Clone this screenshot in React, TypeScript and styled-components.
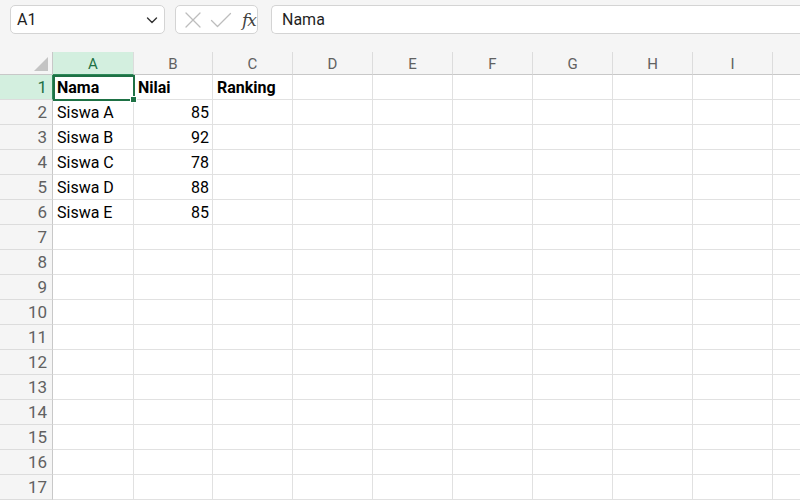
import { createGlobalStyle } from 'styled-components';
import styled from 'styled-components';
import { Fragment } from 'react';

const GlobalStyle = createGlobalStyle`
  html, body { margin: 0; padding: 0; background: #fff; }
  body { font-family: Roboto, "Liberation Sans", sans-serif; overflow: hidden; }
`;

const Page = styled.div`
  width: 800px;
  height: 501px;
  overflow: hidden;
  background: #fff;
  display: flex;
  flex-direction: column;
`;

const Toolbar = styled.div`
  height: 52px;
  flex: none;
  background: #f5f5f5;
  display: flex;
  align-items: flex-start;
  padding: 5px 0 0 10px;
  box-sizing: border-box;
  gap: 10px;
`;

const Box = styled.div<{ $w?: number }>`
  height: 29px;
  box-sizing: border-box;
  background: #fff;
  border: 1px solid #d4d4d4;
  border-radius: 5px;
  display: flex;
  align-items: center;
  ${({ $w }) => ($w ? `width: ${$w}px; flex: none;` : 'flex: 1; border-right: none; border-radius: 5px 0 0 5px;')}
`;

const NameBox = styled(Box)`
  justify-content: space-between;
  padding: 0 4px 0 6px;
  font-size: 16px;
  color: #1f1f1f;
`;

const FxGroup = styled(Box)`
  padding: 0 0 0 8px;
  gap: 8px;
`;

const FormulaBox = styled(Box)`
  margin-left: 3px;
  padding-left: 10px;
  font-size: 16px;
  color: #1f1f1f;
`;

const FxText = styled.span`
  font-family: "DejaVu Serif", "Liberation Serif", serif;
  font-style: italic;
  font-size: 17px;
  color: #424242;
  margin-left: 2px;
  letter-spacing: -1px;
`;

const Grid = styled.div`
  position: relative;
  display: grid;
  grid-template-columns: 53px 81px 79px repeat(8, 80px);
  grid-auto-rows: 25px;
  grid-template-rows: 23px;
`;

const Corner = styled.div`
  position: relative;
  background: #f5f5f5;
  border-right: 1px solid #c8c8c8;
  border-bottom: 1px solid #c8c8c8;
  box-sizing: border-box;
  &::after {
    content: '';
    position: absolute;
    right: 4px;
    bottom: 3px;
    width: 0;
    height: 0;
    border-left: 14px solid transparent;
    border-bottom: 14px solid #c4c4c4;
  }
`;

const ColHead = styled.div<{ $active?: boolean }>`
  background: ${({ $active }) => ($active ? '#d3efdf' : '#f5f5f5')};
  color: ${({ $active }) => ($active ? '#1e7145' : '#616161')};
  border-right: 1px solid #dcdcdc;
  border-bottom: 1px solid ${({ $active }) => ($active ? '#2f8a5a' : '#c8c8c8')};
  box-sizing: border-box;
  display: flex;
  align-items: center;
  justify-content: center;
  font-size: 15px;
  padding-top: 1px;
`;

const RowHead = styled.div<{ $active?: boolean }>`
  background: ${({ $active }) => ($active ? '#d3efdf' : '#f5f5f5')};
  color: ${({ $active }) => ($active ? '#1e7145' : '#616161')};
  border-right: 1px solid ${({ $active }) => ($active ? '#2f8a5a' : '#c8c8c8')};
  border-bottom: 1px solid #dcdcdc;
  box-sizing: border-box;
  display: flex;
  align-items: center;
  justify-content: flex-end;
  padding-right: 5px;
  font-size: 17px;
`;

const Cell = styled.div<{ $bold?: boolean; $num?: boolean }>`
  border-right: 1px solid #e1e1e1;
  border-bottom: 1px solid #e1e1e1;
  box-sizing: border-box;
  display: flex;
  align-items: center;
  justify-content: ${({ $num }) => ($num ? 'flex-end' : 'flex-start')};
  padding: 0 3px 0 4px;
  font-size: 16px;
  font-weight: ${({ $bold }) => ($bold ? 700 : 400)};
  color: #000;
  white-space: nowrap;
  overflow: hidden;
`;

const Selection = styled.div`
  position: absolute;
  left: 53px;
  top: 23px;
  width: 82px;
  height: 26px;
  box-sizing: border-box;
  border: 2px solid #1e7145;
  pointer-events: none;
  &::after {
    content: '';
    position: absolute;
    right: -4px;
    bottom: -4px;
    width: 5px;
    height: 5px;
    background: #1e7145;
    border: 1px solid #fff;
  }
`;

// the tenth column runs past the window edge, so its letter is not shown
const cols = ['A', 'B', 'C', 'D', 'E', 'F', 'G', 'H', 'I', ''];

const data: (string | number)[][] = [
  ['Nama', 'Nilai', 'Ranking'],
  ['Siswa A', 85],
  ['Siswa B', 92],
  ['Siswa C', 78],
  ['Siswa D', 88],
  ['Siswa E', 85],
];

const Chevron = () => (
  <svg width="16" height="16" viewBox="0 0 16 16" fill="none" stroke="#333" strokeWidth="1.4" strokeLinecap="round" strokeLinejoin="round">
    <path d="M3.5 6l4.5 4.5L12.5 6" />
  </svg>
);

const Cross = () => (
  <svg width="18" height="18" viewBox="0 0 18 18" fill="none" stroke="#bdbdbd" strokeWidth="1.3" strokeLinecap="round">
    <path d="M2 2l14 14M16 2L2 16" />
  </svg>
);

const Check = () => (
  <svg width="22" height="18" viewBox="0 0 22 18" fill="none" stroke="#bdbdbd" strokeWidth="1.3" strokeLinecap="round" strokeLinejoin="round">
    <path d="M1.5 9.5l6 6L20.5 2.5" />
  </svg>
);

export default function App() {
  const rows = Array.from({ length: 17 }, (_, i) => i + 1);
  return (
    <Page>
      <GlobalStyle />
      <Toolbar>
        <NameBox $w={155}>
          <span>A1</span>
          <Chevron />
        </NameBox>
        <FxGroup $w={83}>
          <Cross />
          <Check />
          <FxText>fx</FxText>
        </FxGroup>
        <FormulaBox>Nama</FormulaBox>
      </Toolbar>
      <Grid>
        <Corner />
        {cols.map((c, i) => (
          <ColHead key={'c' + i} $active={c === 'A'}>{c}</ColHead>
        ))}
        {rows.map((r) => (
          <Fragment key={r}>
            <RowHead $active={r === 1}>{r}</RowHead>
            {cols.map((c, ci) => {
              const v = data[r - 1]?.[ci];
              return (
                <Cell key={ci} $bold={r === 1} $num={typeof v === 'number'}>
                  {v ?? ''}
                </Cell>
              );
            })}
          </Fragment>
        ))}
        <Selection />
      </Grid>
    </Page>
  );
}
